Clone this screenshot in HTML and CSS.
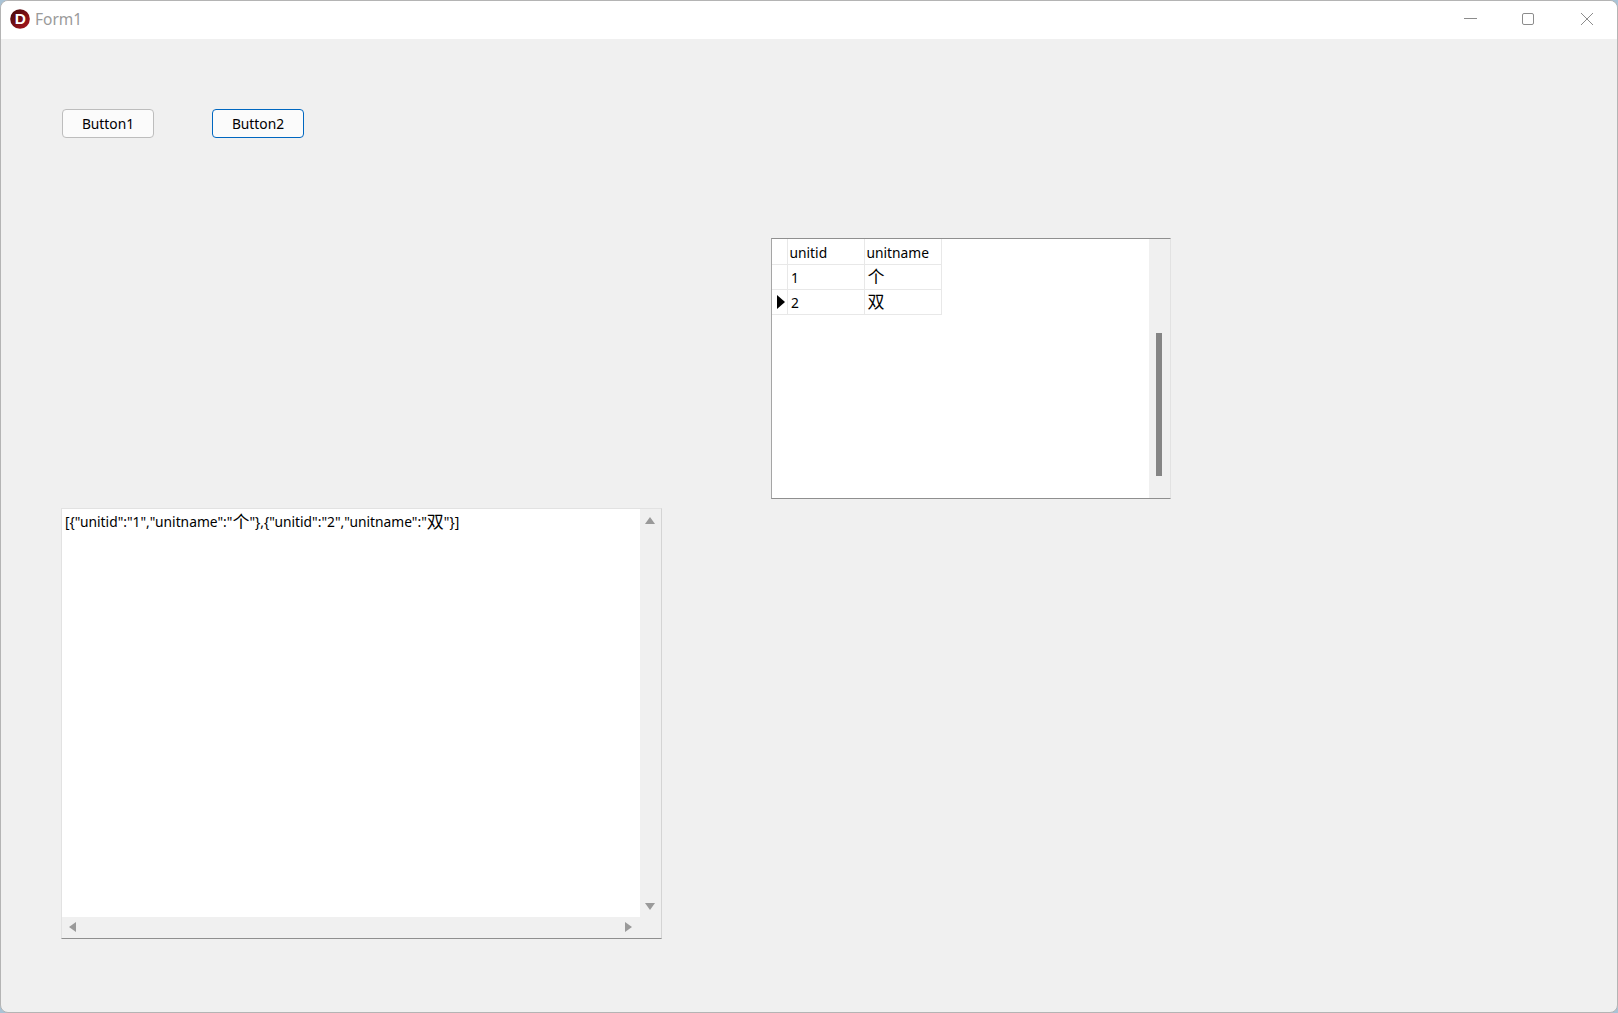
FILE: index.html
```html
<!DOCTYPE html>
<html lang="en">
<head>
  <meta charset="UTF-8">
  <title>Form1</title>
  <link rel="stylesheet" href="styles.css">
</head>
<body>
  <div class="window">
    <header class="titlebar">
      <svg class="app-logo" width="20" height="20" viewBox="0 0 22 22">
        <defs>
          <linearGradient id="logoFill" x1="0" y1="0" x2="1" y2="1">
            <stop offset="0" stop-color="#3f080a"/>
            <stop offset="1" stop-color="#b0161f"/>
          </linearGradient>
        </defs>
        <circle cx="11" cy="11" r="10.8" fill="url(#logoFill)"/>
        <text x="11.3" y="17" text-anchor="middle" class="logo-letter">D</text>
      </svg>
      <span class="title">Form1</span>
      <div class="win-controls">
        <button class="win-btn" aria-label="Minimize">
          <svg width="14" height="14" viewBox="0 0 14 14"><path d="M0 6.5h13" stroke="#8c8c8c" fill="none"/></svg>
        </button>
        <button class="win-btn" aria-label="Maximize">
          <svg width="14" height="14" viewBox="0 0 14 14"><rect x="0.5" y="1.5" width="11" height="11" rx="1.5" stroke="#8c8c8c" fill="none"/></svg>
        </button>
        <button class="win-btn" aria-label="Close">
          <svg width="14" height="14" viewBox="0 0 14 14"><path d="M1 1l12 12M13 1L1 13" stroke="#8c8c8c" fill="none"/></svg>
        </button>
      </div>
    </header>

    <main class="form-body">
      <div class="buttons">
        <button class="btn">Button1</button>
        <button class="btn btn-focus">Button2</button>
      </div>

      <section class="dbgrid">
        <table class="grid-table">
          <thead>
            <tr><th class="ind"></th><th class="col-id">unitid</th><th class="col-name">unitname</th></tr>
          </thead>
          <tbody>
            <tr><td class="ind"></td><td class="col-id">1</td><td class="col-name"><span class="cjk">个</span></td></tr>
            <tr><td class="ind"><span class="row-arrow"></span></td><td class="col-id">2</td><td class="col-name"><span class="cjk">双</span></td></tr>
          </tbody>
        </table>
        <div class="grid-scroll"><div class="grid-thumb"></div></div>
      </section>

      <section class="memo">
        <div class="memo-main">
          <div class="memo-text">[{"unitid":"1","unitname":"<span class="cjk">个</span>"},{"unitid":"2","unitname":"<span class="cjk">双</span>"}]</div>
          <div class="vscroll">
            <span class="arrow arrow-up"></span>
            <span class="arrow arrow-down"></span>
          </div>
        </div>
        <div class="hscroll">
          <span class="arrow arrow-left"></span>
          <span class="arrow arrow-right"></span>
        </div>
      </section>
    </main>
  </div>
</body>
</html>
```

FILE: styles.css
```css
html, body {
  margin: 0;
  padding: 0;
  height: 100%;
  overflow: hidden;
}

body {
  background: #a9c3d6;
  font-family: "Noto Sans", "Noto Sans CJK SC", sans-serif;
  font-size: 13.8px;
  color: #000;
}

.cjk {
  font-family: "Noto Sans CJK SC", sans-serif;
  font-size: 17px;
  line-height: 1;
}

.window {
  box-sizing: border-box;
  height: 1013px;
  border: 1px solid #b4b4b4;
  border-radius: 8px;
  background: #f0f0f0;
  overflow: hidden;
}

/* title bar */
.titlebar {
  box-sizing: border-box;
  display: flex;
  align-items: center;
  height: 38px;
  padding: 0 0 2px 9px;
  background: #fff;
}

.app-logo {
  flex: none;
  margin-right: 5px;
}

.logo-letter {
  font-family: "Liberation Sans", sans-serif;
  font-size: 17px;
  font-weight: bold;
  fill: #fff;
}

.title {
  font-size: 15.5px;
  color: #9a9a9a;
}

.win-controls {
  display: flex;
  margin-left: auto;
  margin-right: 23px;
  gap: 44px;
}

.win-btn {
  display: block;
  width: 14px;
  height: 14px;
  padding: 0;
  border: 0;
  background: none;
}

.win-btn svg {
  display: block;
}

/* form content */
.form-body {
  padding: 70px 0 0 60px;
}

.buttons {
  display: flex;
  gap: 58px;
  margin-left: 1px;
}

.btn {
  box-sizing: border-box;
  width: 92px;
  height: 29px;
  padding: 0;
  border: 1px solid #bdbdbd;
  border-radius: 4px;
  background: #fbfbfb;
  font: inherit;
  color: #000;
}

.btn-focus {
  border-color: #0067c0;
}

/* data grid */
.dbgrid {
  box-sizing: border-box;
  display: flex;
  width: 400px;
  height: 261px;
  margin: 100px 0 0 710px;
  border-top: 1px solid #8f8f8f;
  border-bottom: 1px solid #8f8f8f;
  border-left: 1px solid #a5a5a5;
  border-right: 1px solid #e2e2e2;
  background: #fff;
}

.grid-table {
  align-self: flex-start;
  border-collapse: collapse;
  table-layout: fixed;
  width: 169px;
}

.grid-table th,
.grid-table td {
  box-sizing: border-box;
  height: 25px;
  padding: 0 0 0 2px;
  border: 1px solid #e8e8e8;
  border-top: 0;
  font-weight: normal;
  text-align: left;
  line-height: 22px;
}

.grid-table th {
  padding-top: 3px;
}

.grid-table td {
  padding-top: 1px;
}

.grid-table tr > :first-child {
  border-left: 0;
}

.grid-table td.col-id {
  padding-left: 3.6px;
}

.grid-table td.col-name {
  padding-left: 3px;
}

.grid-table .ind {
  width: 15px;
  padding: 0;
}

.col-id {
  width: 77px;
}

.col-name {
  width: 77px;
}

.row-arrow {
  display: block;
  width: 0;
  height: 0;
  margin-left: 5px;
  border-top: 7px solid transparent;
  border-bottom: 7px solid transparent;
  border-left: 8px solid #000;
}

.grid-scroll {
  flex: none;
  box-sizing: border-box;
  width: 21px;
  margin-left: auto;
  padding: 94px 0 0 7px;
  background: #f0f0f0;
}

.grid-thumb {
  width: 6px;
  height: 143px;
  background: #858585;
}

/* memo */
.memo {
  box-sizing: border-box;
  width: 601px;
  height: 431px;
  margin-top: 9px;
  border-top: 1px solid #e2e2e2;
  border-left: 1px solid #e2e2e2;
  border-right: 1px solid #d4d4d4;
  border-bottom: 1px solid #8f8f8f;
  background: #fff;
}

.memo-main {
  display: flex;
  height: 408px;
}

.memo-text {
  flex: 1;
  padding: 3px 0 0 3px;
  line-height: 19px;
  white-space: nowrap;
}

.memo-text .cjk {
  vertical-align: -1px;
}

.vscroll {
  flex: none;
  display: flex;
  flex-direction: column;
  justify-content: space-between;
  align-items: center;
  box-sizing: border-box;
  width: 21px;
  padding: 8px 2px 7px 0;
  background: #f0f0f0;
}

.hscroll {
  display: flex;
  justify-content: space-between;
  align-items: center;
  box-sizing: border-box;
  height: 21px;
  padding: 0 29px 2px 7px;
  background: #f0f0f0;
}

.arrow {
  display: block;
  width: 0;
  height: 0;
}

.arrow-up {
  border-left: 5px solid transparent;
  border-right: 5px solid transparent;
  border-bottom: 7px solid #9a9a9a;
}

.arrow-down {
  border-left: 5px solid transparent;
  border-right: 5px solid transparent;
  border-top: 7px solid #9a9a9a;
}

.arrow-left {
  border-top: 5px solid transparent;
  border-bottom: 5px solid transparent;
  border-right: 7px solid #9a9a9a;
}

.arrow-right {
  border-top: 5px solid transparent;
  border-bottom: 5px solid transparent;
  border-left: 7px solid #9a9a9a;
}
```
